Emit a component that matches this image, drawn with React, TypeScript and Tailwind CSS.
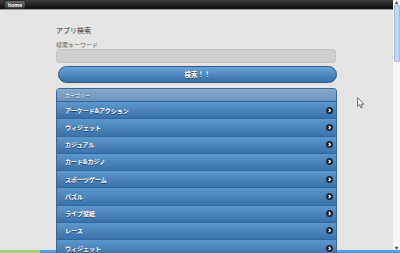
import React from "react";

const items = [
  "アーケード&アクション",
  "ウィジェット",
  "カジュアル",
  "カード&カジノ",
  "スポーツゲーム",
  "パズル",
  "ライブ壁紙",
  "レース",
  "ウィジェット",
];

function Arrow() {
  return (
    <svg width="7" height="7" viewBox="0 0 7 7" className="shrink-0">
      <circle cx="3.5" cy="3.5" r="3.5" fill="#1e2a3a" />
      <path d="M2.8 2 L4.4 3.5 L2.8 5" stroke="#fff" strokeWidth="1.1" fill="none" />
    </svg>
  );
}

export default function App() {
  return (
    <div
      className="w-[400px] h-[253px] overflow-hidden flex flex-col bg-[#e4e4e4]"
      style={{ fontFamily: '"Noto Sans CJK JP", "Liberation Sans", sans-serif' }}
    >
      <div className="flex flex-1 min-h-0">
        <div className="flex-1 flex flex-col min-w-0 relative">
          <div className="h-[13px] bg-gradient-to-b from-[#3c3c3c] to-[#0e0e0e] flex items-center pl-[4px] border-b border-[#9a9a9a]">
            <div className="h-[9px] px-[3px] rounded-[3px] bg-gradient-to-b from-[#6a6a6a] to-[#3a3a3a] border border-[#222] flex items-center text-[5px] leading-none font-bold text-white">
              home
            </div>
          </div>
          <div className="flex-1 pl-[56px] pr-[57px] pt-[15px]">
            <div className="text-[7px] leading-[10px] text-[#333]">アプリ検索</div>
            <div className="mt-[6px] text-[6px] leading-[7px] text-[#666]">検索キーワード</div>
            <div className="mt-[1px] h-[14px] rounded-[4px] bg-[#cfcfcf] border border-[#c4c4c4]" />
            <div className="mt-[3px] ml-[2px] mr-[-1px] h-[17px] rounded-full bg-gradient-to-b from-[#6aa2d4] to-[#386fa6] border border-[#2d5a88] flex items-center justify-center text-[6.5px] font-bold text-white [text-shadow:0_1px_0_#1d3d60]">
              検索！！
            </div>
            <div className="mt-[5px] mr-[-1px] rounded-t-[4px] overflow-hidden border border-[#3a6a98] border-b-0">
              <div className="h-[12px] bg-gradient-to-b from-[#86a8cc] to-[#6d92bb] flex items-center pl-[8px] text-[5px] text-white [text-shadow:0_1px_0_#3b5b80]">
                カテゴリー
              </div>
              {items.map((t, i) => (
                <div
                  key={i}
                  className="h-[17.25px] bg-gradient-to-b from-[#5e97c9] to-[#3b73aa] border-t border-[#3468a0] flex items-center justify-between pl-[8px] pr-[3px] text-[6px] font-bold text-white [text-shadow:0_1px_0_#1f4266]"
                >
                  <span>{t}</span>
                  <Arrow />
                </div>
              ))}
            </div>
          </div>
          <svg className="absolute left-[357px] top-[97px]" width="8" height="12" viewBox="0 0 8 12">
            <path d="M0.5 0.5 L0.5 9.5 L2.6 7.6 L4 11 L5.4 10.4 L4 7.2 L7 7.2 Z" fill="#fff" stroke="#555" strokeWidth="0.8" />
          </svg>
        </div>
        <div className="w-[7px] bg-[#f7f7f7] flex flex-col items-center">
          <div className="h-[5px] w-full flex items-center justify-center text-[4px] leading-none text-[#557]">▲</div>
          <div className="h-[57px] w-[6px] bg-[#c5d5f5] border border-[#aabbe0] rounded-[1px]" />
          <div className="flex-1" />
          <div className="h-[5px] w-full flex items-center justify-center text-[4px] leading-none text-[#557]">▼</div>
        </div>
      </div>
      <div className="h-[3px] flex">
        <div className="w-[40px] bg-[#9fd27a]" />
        <div className="flex-1 bg-[#4aa0e0]" />
      </div>
    </div>
  );
}
